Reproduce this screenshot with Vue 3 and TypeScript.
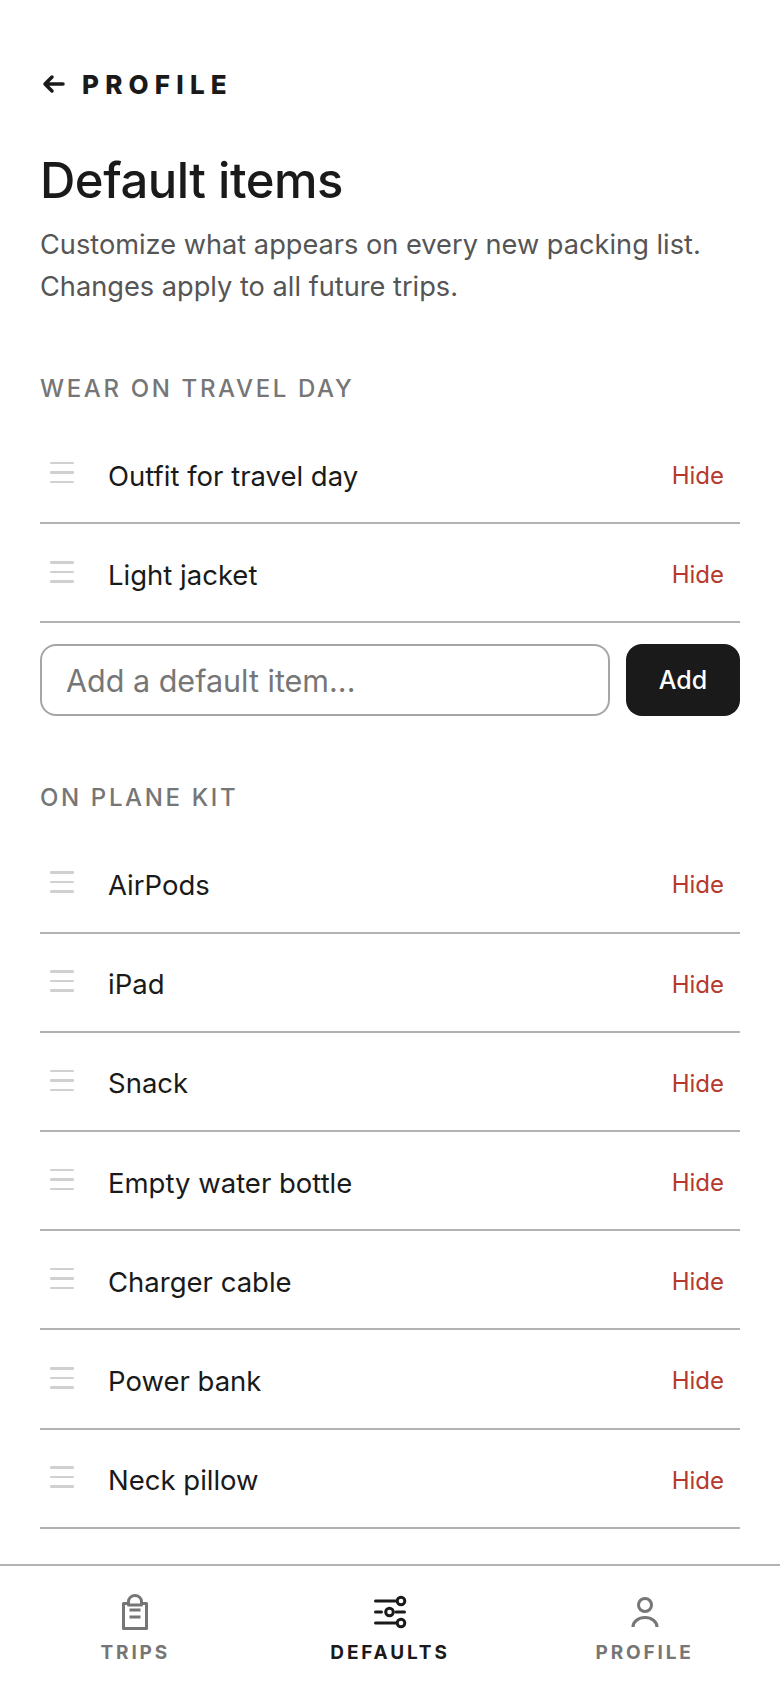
<script setup lang="ts">
const sections = [
  { title: 'Wear on travel day', items: ['Outfit for travel day', 'Light jacket'], add: true },
  {
    title: 'On plane kit',
    items: ['AirPods', 'iPad', 'Snack', 'Empty water bottle', 'Charger cable', 'Power bank', 'Neck pillow'],
    add: false,
  },
]
</script>

<template>
  <div class="screen">
    <main class="content">
      <a class="back">
        <svg class="back-icon" viewBox="0 0 24 24" fill="none" stroke="currentColor" stroke-width="3.5" stroke-linecap="round" stroke-linejoin="round">
          <path d="M21 12H3M10 5l-7 7 7 7" />
        </svg>
        <span>PROFILE</span>
      </a>
      <h1 class="title">Default items</h1>
      <p class="sub">Customize what appears on every new packing list.<br />Changes apply to all future trips.</p>

      <section v-for="s in sections" :key="s.title" class="section">
        <h2 class="label">{{ s.title }}</h2>
        <ul class="list">
          <li v-for="item in s.items" :key="item" class="row">
            <span class="handle"><i /><i /><i /></span>
            <span class="name">{{ item }}</span>
            <button class="hide">Hide</button>
          </li>
        </ul>
        <form v-if="s.add" class="add-row" @submit.prevent>
          <input class="add-input" placeholder="Add a default item..." />
          <button class="add-btn">Add</button>
        </form>
      </section>
    </main>

    <nav class="tabs">
      <a class="tab">
        <svg class="tab-icon" viewBox="0 0 36 36" fill="none" stroke="currentColor" stroke-width="3" stroke-linejoin="round">
          <path d="M11.500 9.500H6.500v25h23v-25h-5" />
          <path d="M11.500 11V7.500a6.500 6 0 0 1 13 0V11z" />
          <path d="M12.500 16h11M12.500 23h11" />
        </svg>
        <span>TRIPS</span>
      </a>
      <a class="tab active">
        <svg class="tab-icon" viewBox="0 0 36 36" fill="none" stroke="currentColor" stroke-width="3" stroke-linecap="round">
          <path d="M3.500 7H23.500M3.500 29H23.500M3.500 18H9.500M24 18H32.500" />
          <circle cx="29" cy="7" r="3.800" />
          <circle cx="17.500" cy="18" r="3.800" />
          <circle cx="29" cy="29" r="3.800" />
        </svg>
        <span>DEFAULTS</span>
      </a>
      <a class="tab">
        <svg class="tab-icon" viewBox="0 0 36 36" fill="none" stroke="currentColor" stroke-width="3">
          <circle cx="18" cy="11" r="6.500" />
          <path d="M6 33a12 9.500 0 0 1 24 0" />
        </svg>
        <span>PROFILE</span>
      </a>
    </nav>
  </div>
</template>

<style scoped>
.screen {
  height: 1688px;
  display: flex;
  flex-direction: column;
  background: #fff;
  color: #1a1a1a;
  font-family: Inter, 'Liberation Sans', sans-serif;
  overflow: hidden;
}
.content {
  flex: 1;
  min-height: 0;
  padding: 70px 40px 0;
}
.back {
  display: flex;
  align-items: center;
  gap: 16px;
  height: 28px;
  font-size: 26px;
  font-weight: 800;
  letter-spacing: 6.200px;
}
.back-icon {
  width: 24px;
  height: 24px;
  margin-left: 2px;
}
.title {
  margin: 51px 0 0;
  font-size: 49px;
  line-height: 64px;
  font-weight: 500;
  letter-spacing: -0.01em;
}
.sub {
  margin: 11px 0 0;
  font-size: 27.200px;
  line-height: 42px;
  color: #555;
}
.section {
  margin-top: 66px;
}
.section + .section {
  margin-top: 67px;
}
.label {
  margin: 0;
  font-size: 24px;
  line-height: 30px;
  font-weight: 500;
  letter-spacing: 0.11em;
  text-transform: uppercase;
  color: #767676;
}
.list {
  list-style: none;
  margin: 21px 0 0;
  padding: 0;
}
.row {
  display: flex;
  align-items: center;
  height: 99.200px;
  border-bottom: 2px solid #b2b2b2;
  box-sizing: border-box;
  padding: 4px 16px 0 10px;
}
.handle {
  display: flex;
  flex-direction: column;
  gap: 7px;
  width: 24px;
  margin-right: 34px;
  margin-top: -6px;
}
.handle i {
  display: block;
  height: 2.500px;
  background: #d0d0d0;
  border-radius: 1px;
}
.name {
  flex: 1;
  font-size: 27.500px;
}
.hide {
  border: 0;
  background: none;
  padding: 0;
  font: inherit;
  font-size: 24px;
  color: #b5392c;
}
.add-row {
  display: flex;
  gap: 16px;
  margin-top: 21px;
}
.add-input {
  flex: 1;
  min-width: 0;
  height: 72px;
  box-sizing: border-box;
  border: 2px solid #a6a6a6;
  border-radius: 16px;
  padding: 0 24px;
  font: inherit;
  font-size: 30.500px;
  color: #1a1a1a;
  background: #fff;
}
.add-input::placeholder {
  color: #767676;
  opacity: 1;
}
.add-btn {
  width: 114px;
  height: 72px;
  border: 0;
  border-radius: 16px;
  background: #1a1a1a;
  color: #fff;
  font: inherit;
  font-size: 25px;
  font-weight: 500;
}
.tabs {
  height: 124px;
  box-sizing: border-box;
  border-top: 2px solid #b2b2b2;
  display: flex;
  padding: 28px 8px 0;
}
.tab {
  flex: 1;
  display: flex;
  flex-direction: column;
  align-items: center;
  gap: 11px;
  font-size: 19px;
  line-height: 24px;
  font-weight: 700;
  letter-spacing: 0.15em;
  color: #767676;
}
.tab.active {
  color: #1a1a1a;
}
.tab-icon {
  width: 36px;
  height: 36px;
}
</style>

<style>
html, body { margin: 0; overflow: hidden; }
</style>
